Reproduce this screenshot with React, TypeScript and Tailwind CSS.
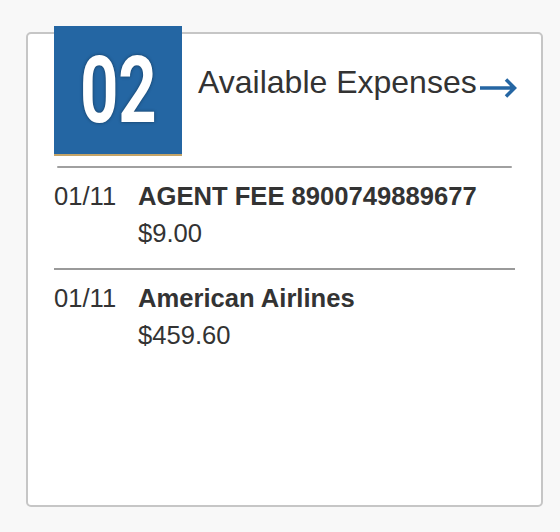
import React from 'react';

type Expense = { date: string; name: string; amount: string };

const expenses: Expense[] = [
  { date: '01/11', name: 'AGENT FEE 8900749889677', amount: '$9.00' },
  { date: '01/11', name: 'American Airlines', amount: '$459.60' },
];

const ArrowRight: React.FC = () => (
  <svg width="38" height="20" viewBox="0 0 38 20" fill="none" className="mt-[44px] ml-[2px] shrink-0">
    <path d="M1 10H35M27 1.5L35.5 10L27 18.5" stroke="#2566a3" strokeWidth="3.5" strokeLinecap="butt" />
  </svg>
);

const ExpenseRow: React.FC<{ item: Expense }> = ({ item }) => (
  <div className="flex pt-[10px] text-[25.6px] leading-[37px] text-[#333]">
    <div className="w-[84px] shrink-0">{item.date}</div>
    <div className="flex flex-col">
      <span className="font-bold">{item.name}</span>
      <span>{item.amount}</span>
    </div>
  </div>
);

export default function App() {
  return (
    <div
      className="min-h-[532px] w-[560px] bg-[#f8f8f8] pt-[32px] pl-[26px]"
      style={{ fontFamily: '"Liberation Sans", Arial, sans-serif' }}
    >
      <div className="h-[475px] w-[517px] rounded-[5px] border-2 border-[#c6c6c6] bg-white px-[26px]">
        {/* header */}
        <div className="flex items-start">
          <div className="-mt-[8px] flex h-[130px] w-[128px] shrink-0 items-center justify-center border-b-2 border-[#c4a468] bg-[#2466a3]">
            <span
              className="inline-block scale-x-[0.72] text-[93px] leading-none font-bold text-white [text-shadow:0_0_4px_rgba(0,0,0,0.45)]"
              style={{ fontFamily: 'Roboto, "Liberation Sans", sans-serif' }}
            >
              02
            </span>
          </div>
          <div className="ml-[16px] mt-[32px] text-[32px] leading-none whitespace-nowrap text-[#333]">
            Available Expenses
          </div>
          <ArrowRight />
        </div>

        <div className="mx-[3px] mt-[10px] h-[2px] rounded-full bg-[#a0a0a0]" />

        <div className="pb-[16px]">
          <ExpenseRow item={expenses[0]} />
        </div>
        <div className="h-[2px] bg-[#9a9a9a]" />
        <ExpenseRow item={expenses[1]} />
      </div>
    </div>
  );
}
